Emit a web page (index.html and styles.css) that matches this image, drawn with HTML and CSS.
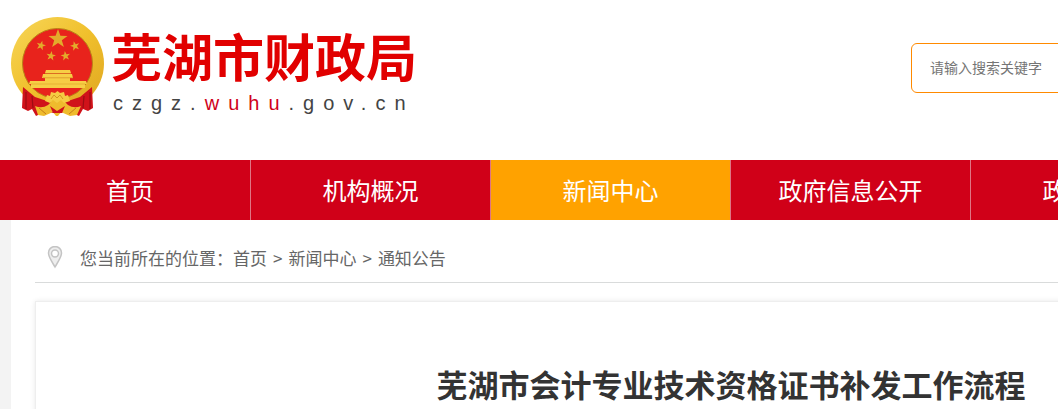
FILE: index.html
```html
<!DOCTYPE html>
<html lang="zh-CN">

<head>
    <meta charset="UTF-8">
    <meta name="viewport" content="width=device-width, initial-scale=1.0">
    <title>芜湖市会计专业技术资格证书补发工作流程</title>
    <link rel="stylesheet" href="styles.css">
</head>

<body>

    <!-- Header -->
    <header class="header">
        <a href="#" class="logo">
            <svg class="emblem" viewBox="0 0 94 100" aria-hidden="true">
                <defs>
                    <linearGradient id="gold" x1="0" y1="0" x2="1" y2="1">
                        <stop offset="0" stop-color="#f7d659"/>
                        <stop offset="0.5" stop-color="#f0c02c"/>
                        <stop offset="1" stop-color="#dfa521"/>
                    </linearGradient>
                    <path id="star" d="M0-10 2.4-3.2 9.5-3.1 3.8 1.2 5.9 8.1 0 4 -5.9 8.1 -3.8 1.2 -9.5-3.1 -2.4-3.2Z"/>
                </defs>
                <!-- ring -->
                <circle cx="46.5" cy="46.5" r="46.5" fill="url(#gold)"/>
                <circle cx="46.5" cy="46.5" r="35" fill="#e8231c" stroke="#b98218" stroke-width="1"/>
                <!-- stars -->
                <g fill="#e3ab2b">
                    <use href="#star" transform="translate(47 22)"/>
                    <use href="#star" transform="translate(30 28.5) rotate(15) scale(.5)"/>
                    <use href="#star" transform="translate(64 29) rotate(-15) scale(.5)"/>
                    <use href="#star" transform="translate(40 39) rotate(8) scale(.5)"/>
                    <use href="#star" transform="translate(54.5 39) rotate(-8) scale(.5)"/>
                </g>
                <!-- gate -->
                <g fill="#f6ce45">
                    <path d="M35 53h24l1 3H34zM32 57h29l1 4H31zM34 61h25v4H34zM19 64h56l1 3H18zM20 67h54v4H20z"/>
                </g>
                <path d="M34 56.5h26M32 60.8h30" stroke="#d78d25" stroke-width=".7"/>
                <path d="M20 67h54" stroke="#e2a72b" stroke-width=".7"/>
                <!-- ribbons -->
                <path d="M12 70 24 80 36 84 46 88 57 84 69 80 81 70 82 91 77 94 72 92 68 99 57 94 46 97 35 94 25 99 21 92 17 94 11 91Z" fill="#d0121a"/>
                <path d="M15 75v17M21 79l1 12M79 75v17M73 79l-1 12" stroke="#9c0c13" stroke-width="1.2" fill="none"/>
                <path d="M24 89q7 3 13-1l5-5h10l5 5q6 4 13 1l-4 9-7 1-9-4-3 4h-2l-3-4-9 4-6-1Z" fill="#efbb2d"/>
                <path d="M28 91l7 6M65 91l-7 6" stroke="#c47d18" stroke-width="1"/>
                <path d="M39 89l7 5 8-5-3 7h-9Z" fill="#d0121a"/>
                <!-- gear -->
                <path d="M34 84l2-6 3 1 1-4 4 1 2.5-2 2.500 2 4-1 1 4 3-1 2 6-6 2-3-3-4 3-4-3-3 3Z" fill="#f5cb43"/>
                <path d="M40 82l3-4 3 3 3-3 3 4" stroke="#d3961f" stroke-width="1" fill="none"/>
            </svg>
            <span class="logo-text">
                <span class="logo-name">芜湖市财政局</span>
                <span class="logo-domain">czgz.<em>wuhu</em>.gov.cn</span>
            </span>
        </a>
        <form class="search">
            <input type="text" class="search-input" placeholder="请输入搜索关键字" aria-label="请输入搜索关键字">
        </form>
    </header>

    <!-- Main navigation -->
    <nav class="nav">
        <ul class="nav-list">
            <li><a href="#">首页</a></li>
            <li><a href="#">机构概况</a></li>
            <li><a href="#" class="active">新闻中心</a></li>
            <li><a href="#">政府信息公开</a></li>
            <li><a href="#">政务服务</a></li>
        </ul>
    </nav>

    <main class="main">
        <div class="breadcrumb">
            <svg class="pin" viewBox="0 0 16 24" aria-hidden="true">
                <path d="M8 1.5C4.200 1.500 1.500 4.300 1.500 8c0 4.200 4 9.500 6.500 14 2.500-4.500 6.500-9.800 6.500-14 0-3.700-2.700-6.500-6.500-6.500Z" fill="#eee" stroke="#c4c4c4" stroke-width="1.5"/>
                <circle cx="8" cy="8.5" r="3.5" fill="#fff" stroke="#c4c4c4" stroke-width="1.5"/>
            </svg>
            <span>您当前所在的位置：</span>
            <a href="#">首页</a>
            <span class="sep">&gt;</span>
            <a href="#">新闻中心</a>
            <span class="sep">&gt;</span>
            <a href="#">通知公告</a>
        </div>

        <article class="article">
            <h1>芜湖市会计专业技术资格证书补发工作流程</h1>
        </article>
    </main>

</body>

</html>
```
FILE: styles.css
```css
* {
    margin: 0;
    padding: 0;
    box-sizing: border-box;
}

body {
    background-color: #f3f3f3;
    color: #333;
    font-family: "Noto Sans CJK SC", sans-serif;
    overflow: hidden;
}

a {
    color: inherit;
    text-decoration: none;
}

/* Header */
.header {
    display: flex;
    justify-content: space-between;
    min-width: 1451px;
    height: 160px;
    padding-left: 11px;
    background-color: #fff;
}

.logo {
    display: flex;
    gap: 6px;
    padding-top: 17px;
}

.emblem {
    width: 94px;
    height: 100px;
}

.logo-text {
    display: flex;
    flex-direction: column;
    padding-top: 2px;
}

.logo-name {
    color: #e10000;
    font-size: 51px;
    font-weight: bold;
    line-height: 72px;
}

.logo-domain {
    padding-left: 2px;
    color: #444;
    font-family: "Liberation Sans", sans-serif;
    font-size: 20px;
    line-height: 24px;
    letter-spacing: 9px;
}

.logo-domain em {
    color: #d0021b;
    font-style: normal;
}

.search {
    width: 540px;
    padding-top: 43px;
}

.search-input {
    width: 100%;
    height: 50px;
    padding: 0 18px 2px;
    border: 1px solid #ff8a00;
    border-radius: 6px;
    font-family: inherit;
    font-size: 14px;
}

.search-input::placeholder {
    color: #757575;
}

/* Navigation */
.nav {
    min-width: 1451px;
    padding-left: 10px;
    background-color: #d00018;
}

.nav-list {
    display: flex;
    list-style: none;
}

.nav-list li {
    width: 240px;
    border-right: 1px solid #df7584;
}

.nav-list li:first-child {
    width: 241px;
}

.nav-list a {
    display: block;
    color: #fff;
    font-size: 24px;
    line-height: 60px;
    text-align: center;
}

.nav-list .active {
    background-color: #ffa200;
}

/* Content */
.main {
    min-width: 1440px;
    margin-left: 11px;
    padding: 0 24px;
    background-color: #fff;
}

.breadcrumb {
    display: flex;
    align-items: center;
    height: 63px;
    padding: 12px 0 0 12px;
    border-bottom: 1px solid #d9dbdb;
    color: #666;
    font-size: 17px;
}

.pin {
    width: 16px;
    height: 24px;
    margin-right: 17px;
}

.sep {
    margin: 0 6px;
}

.article {
    min-height: 400px;
    margin-top: 18px;
    padding-top: 58px;
    border: 1px solid #eee;
    box-shadow: 0 0 5px #e8e8e8;
}

.article h1 {
    font-size: 31px;
    line-height: 48px;
    text-align: center;
}
```
